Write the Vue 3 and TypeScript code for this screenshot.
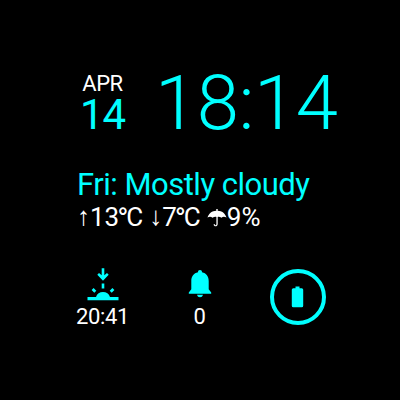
<script setup lang="ts">
const month = 'APR'
const day = '14'
const time = '18:14'
const forecast = 'Fri: Mostly cloudy'
</script>

<template>
  <main class="face">
    <header class="top">
      <div class="date"><span class="month">{{ month }}</span><span class="day">{{ day }}</span></div>
      <div class="time">{{ time }}</div>
    </header>
    <section class="weather">
      <div class="forecast">{{ forecast }}</div>
      <div class="details">
        <span class="arrow">↑</span><span>13</span><span class="deg">°</span><span class="unit">C</span>
        <span class="arrow low">↓</span><span>7</span><span class="deg">°</span><span class="unit">C</span>
        <svg class="rain" width="20" height="20" viewBox="0 0 20 20"><path d="M.5 9.500C2 5 5 3 9.300 2.700V1h1.400v1.700C15 3 18 5 19.500 9.500c-2-1-3.800-.9-5 .2-1.200-.8-2.400-.9-3.800-.8V16c0 3-4 3.200-4.100.3h1.300c.1 1.400 1.500 1.200 1.500-.3V8.900c-1.500-.1-2.700 0-3.900.8-1.400-1.100-3.200-1.200-5-.2z" fill="#fff"/></svg><span>9%</span>
      </div>
    </section>
    <footer class="widgets">
      <div class="widget">
        <svg width="36" height="36" viewBox="0 0 36 36"><path d="M2.500 30H11C12 26.800 14.600 25 18 25s6 1.800 7 5h8.500v3.200h-31zM16.700 1.200h2.600v7l2.700-2.200 1.700 1.700-5.700 6-5.700-6L14 6l2.700 2.200zM16.700 16.500h2.600v5h-2.600zM6.600 23.100l2-2 2.700 2.700-2 2zM29.400 23.100l-2-2-2.700 2.700 2 2z" fill="#0ff"/></svg>
        <span>20:41</span>
      </div>
      <div class="widget bell">
        <svg width="36" height="36" viewBox="0 0 36 36"><path d="M18 3c1.300 0 2 .9 2 2.300 4.300.8 6.700 4.200 6.700 8.700v8.300l2.500 3.200v1.200H6.800v-1.200l2.500-3.200V14c0-4.500 2.400-7.900 6.700-8.700 0-1.400.7-2.300 2-2.300zM15 27.800h6c-.4 1.700-1.500 2.500-3 2.500s-2.600-.8-3-2.500z" fill="#0ff"/></svg>
        <span>0</span>
      </div>
      <div class="ring"><svg width="24" height="24" viewBox="0 0 24 24"><path d="M9.500 1.500h4v1.800h2.200q1.500 0 1.500 1.500v16q0 1.500-1.500 1.500H7.300q-1.500 0-1.500-1.500v-16q0-1.500 1.500-1.500h2.200z" fill="#0ff"/></svg></div>
    </footer>
  </main>
</template>

<style>
body { margin: 0; background: #000; }
</style>
<style scoped>
.face { box-sizing: border-box; width: 400px; height: 400px; padding: 60px 60px 0 77px; background: #000; color: #fff; font-family: Roboto, "Noto Sans", "DejaVu Sans", sans-serif; overflow: hidden; }
.top { display: flex; height: 108px; color: #0ff; }
.date { display: flex; flex-direction: column; width: 51px; align-items: center; padding: 12px 0 0; }
.month { color: #fff; font-size: 22px; line-height: 24px; letter-spacing: -.5px; }
.day { font-size: 42px; line-height: 38px; font-weight: 400; letter-spacing: -1px; }
.time { margin-left: 27px; font-size: 76px; line-height: 86px; font-weight: 300; letter-spacing: -.4px; white-space: nowrap; }
.forecast { color: #0ff; font-size: 31px; line-height: 33px; letter-spacing: -.5px; white-space: nowrap; }
.details { display: flex; height: 32px; font-size: 26px; line-height: 32px; white-space: nowrap; }
.arrow { display: flex; justify-content: center; width: 13px; font-family: "Liberation Serif", serif; font-size: 26px; }
.low { margin-left: 6px; }
.deg { width: 9px; margin-left: -2px; padding-top: 2px; font-size: 30px; }
.unit { width: 17px; }
.rain { margin: 7px 0 0 6px; }
.widgets { display: flex; margin-top: 34px; }
.widget { display: flex; flex-direction: column; align-items: center; width: 51px; font-size: 22px; line-height: 28px; letter-spacing: -.4px; }
.bell { margin-left: 46px; }
.ring { box-sizing: border-box; width: 56px; height: 56px; margin: 2px 0 0 44.500px; border: 4px solid #0ff; border-radius: 50%; display: grid; place-items: center; }
</style>
